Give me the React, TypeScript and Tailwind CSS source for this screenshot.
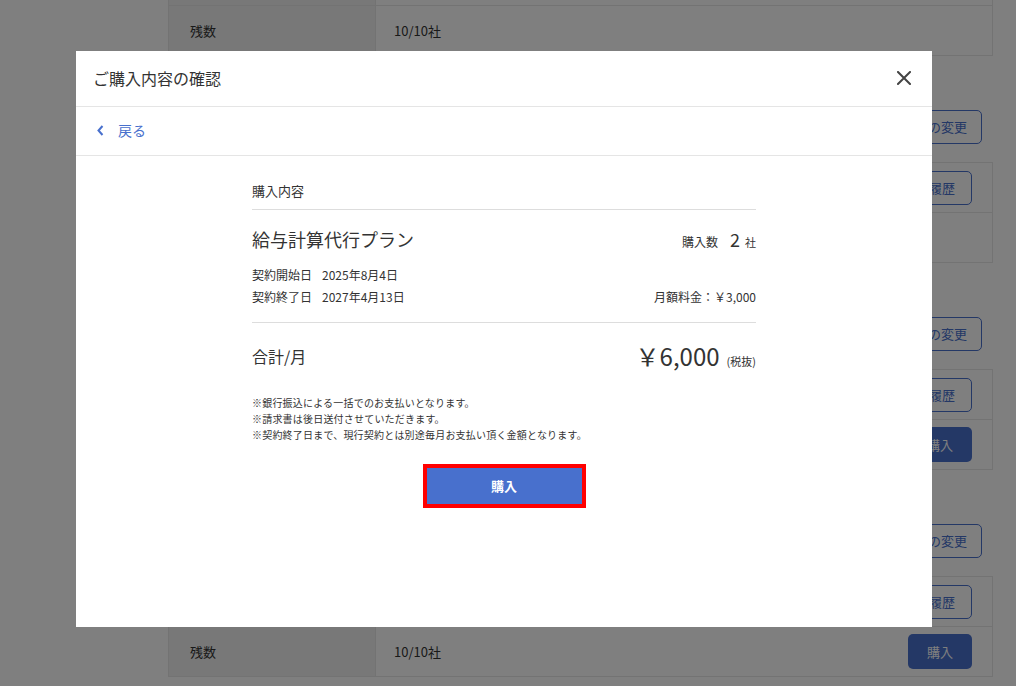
import React from "react";

const BLUE = "#4870cd";

type RowProps = { label: string; value: string; action?: "history" | "buy" | "none" };

function Row({ label, value, action = "none" }: RowProps) {
  return (
    <div className="flex h-[49px]">
      <div className="flex w-[207px] items-center border-r border-[#e6e6e6] bg-[#f0f0f0] pl-[21px] text-[13px]">
        {label}
      </div>
      <div className="flex flex-1 items-center justify-between pl-[18px] pr-[20px] text-[13px]">
        <span>{value}</span>
        {action === "history" && (
          <button className="h-[34px] rounded-[5px] border border-[#4870cd] bg-white px-[16px] text-[13px] text-[#4870cd]">
            購入履歴
          </button>
        )}
        {action === "buy" && (
          <button className="h-[35px] w-[64px] rounded-[5px] bg-[#4870cd] text-[13px] text-white">
            購入
          </button>
        )}
      </div>
    </div>
  );
}

function Section({ lastAction }: { lastAction: "buy" | "none" }) {
  return (
    <div className="w-[825px] pb-[54px]">
      <div className="flex h-[34px] items-center justify-between pr-[11px]">
        <span className="text-[16px] font-bold">給与計算代行プラン</span>
        <button className="h-[34px] rounded-[5px] border border-[#4870cd] bg-white px-[14px] text-[13px] text-[#4870cd]">
          プランの変更
        </button>
      </div>
      <div className="mt-[18px] border border-[#e6e6e6]">
        <Row label="契約期間" value="2025年8月4日〜2027年4月13日" action="history" />
        <div className="border-t border-[#e6e6e6]">
          <Row label="残数" value="10/10社" action={lastAction} />
        </div>
      </div>
    </div>
  );
}

export default function App() {
  return (
    <div className="relative h-[686px] overflow-hidden bg-white font-['Noto_Sans_CJK_JP','Noto_Sans',sans-serif] text-[#333]">
      <div className="-mt-[97px] pl-[168px]">
        <Section lastAction="none" />
        <Section lastAction="none" />
        <Section lastAction="buy" />
        <Section lastAction="buy" />
      </div>

      <div className="fixed inset-0 bg-black/50" />

      <div className="fixed left-[76px] top-[51px] flex h-[576px] w-[856px] flex-col bg-white">
        <div className="flex h-[56px] shrink-0 items-center justify-between border-b border-[#e5e5e5] pb-[1px] pl-[17px] pr-[21px]">
          <span className="text-[16px] text-[#333]">ご購入内容の確認</span>
          <svg width="14" height="14" viewBox="0 0 14 14" className="block">
            <path d="M1 1L13 13M13 1L1 13" stroke="#444" strokeWidth="2" strokeLinecap="square" />
          </svg>
        </div>
        <div className="flex h-[49px] shrink-0 items-center border-b border-[#e5e5e5] pb-[1px] pl-[21px]">
          <svg width="7" height="11" viewBox="0 0 7 11" className="block">
            <path d="M5.5 1L1.5 5.5L5.5 10" stroke={BLUE} strokeWidth="2" fill="none" />
          </svg>
          <span className="ml-[14px] text-[14px] text-[#4870cd]">戻る</span>
        </div>

        <div className="flex flex-1 justify-center">
          <div className="w-[504px] pt-[25px]">
            <div className="border-b border-[#dddddd] pb-[8px] text-[13px] leading-[20px]">購入内容</div>

            <div className="border-b border-[#dddddd] pb-[14px]">
              <div className="mt-[16px] flex items-baseline justify-between">
                <span className="text-[18px] leading-[27px]">給与計算代行プラン</span>
                <span className="flex items-baseline">
                  <span className="text-[12px]">購入数</span>
                  <span className="ml-[12px] text-[18px]">2</span>
                  <span className="ml-[5px] text-[11px]">社</span>
                </span>
              </div>
              <div className="mt-[11px] text-[12px] leading-[22px]">
                <div>
                  <span>契約開始日</span>
                  <span className="ml-[10px]">2025年8月4日</span>
                </div>
                <div className="flex justify-between">
                  <span>
                    <span>契約終了日</span>
                    <span className="ml-[10px]">2027年4月13日</span>
                  </span>
                  <span>月額料金：￥3,000</span>
                </div>
              </div>
            </div>

            <div className="mt-[15px] flex h-[36px] items-center justify-between">
              <span className="text-[16px]">合計/月</span>
              <span className="flex items-baseline">
                <span className="text-[24px] leading-[36px]">￥6,000</span>
                <span className="ml-[7px] text-[11px]">(税抜)</span>
              </span>
            </div>

            <div className="mt-[21px] text-[10px] leading-[16px] tracking-[0.2px]">
              <div>※銀行振込による一括でのお支払いとなります。</div>
              <div>※請求書は後日送付させていただきます。</div>
              <div>※契約終了日まで、現行契約とは別途毎月お支払い頂く金額となります。</div>
            </div>

            <div className="mt-[21px] flex justify-center">
              <div className="border-[4px] border-[#ff0000]">
                <button className="block h-[36px] w-[155px] bg-[#4870cd] text-[13px] font-bold text-white">
                  購入
                </button>
              </div>
            </div>
          </div>
        </div>
      </div>
    </div>
  );
}
